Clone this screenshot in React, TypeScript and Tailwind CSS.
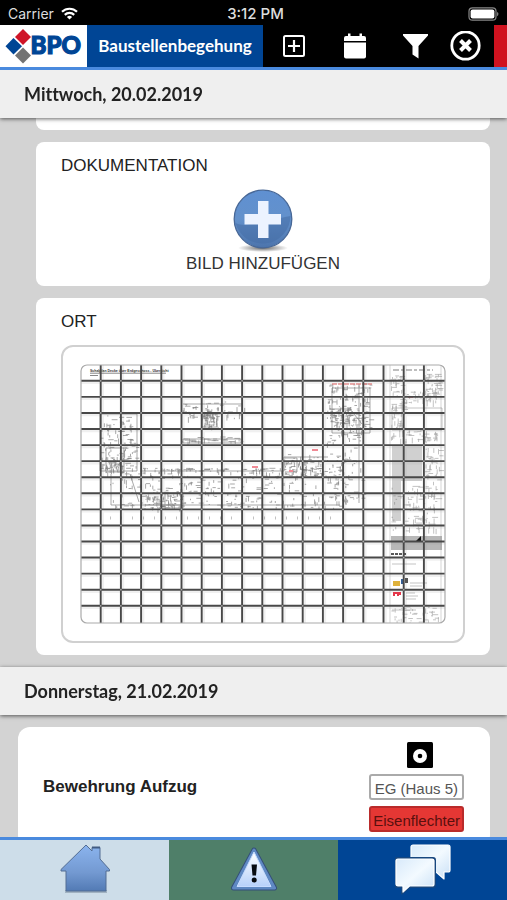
import type { ReactNode } from "react";

const SANS = "font-['Liberation_Sans',Arial,sans-serif]";
const LATO = "font-['Lato','Open_Sans',sans-serif]";

export default function App() {
  return (
    <div className={`flex h-dvh flex-col overflow-hidden bg-[#d3d3d3] text-[#222] ${SANS}`}>
      <StatusBar />
      <Toolbar />
      <main className="min-h-0 flex-1 overflow-y-auto [scrollbar-width:none]">
        <DateHeading>Mittwoch, 20.02.2019</DateHeading>
        <div className="flex flex-col gap-3 pb-3 pl-9 pr-[17px]">
          {/* end of the entry that is scrolled under the heading */}
          <div className="h-3 rounded-b-lg bg-white" />
          <section className="rounded-lg bg-white px-[25px] pt-3 pb-[10px]">
            <h3 className="text-[17px] leading-6">DOKUMENTATION</h3>
            <button type="button" className="mx-auto mt-[10px] flex flex-col items-center">
              <AddImageIcon />
              <span className="text-[17px] leading-6 text-[#333]">BILD HINZUFÜGEN</span>
            </button>
          </section>
          <section className="rounded-lg bg-white px-[25px] pt-3 pb-3">
            <h3 className="text-[17px] leading-6">ORT</h3>
            <div className="mt-[11px] rounded-xl border-2 border-[#d0d0d0] p-[17px]">
              <FloorPlan />
            </div>
          </section>
        </div>
        <DateHeading>Donnerstag, 21.02.2019</DateHeading>
        <div className="pt-3 pl-[18px] pr-[17px]">
          <article className="flex items-center justify-between rounded-xl bg-white py-[15px] pl-[25px] pr-[26px]">
            <h3 className="text-[17px] leading-6 font-bold">Bewehrung Aufzug</h3>
            <div className="flex flex-col items-end gap-[6px] text-[15px]">
              <span className="mr-[31px]">
                <DiscIcon />
              </span>
              <span className="rounded-[3px] border-2 border-[#aaa] px-1 pt-1 leading-[18px] text-[#555]">
                EG (Haus 5)
              </span>
              <span className="rounded-[3px] border-2 border-[#b92b2b] bg-[#e53734] px-[2px] pt-1 leading-[18px] text-[#5a100e]">
                Eisenflechter
              </span>
            </div>
          </article>
        </div>
      </main>
      <TabBar />
    </div>
  );
}

function StatusBar() {
  return (
    <div className="grid h-[25px] shrink-0 grid-cols-3 items-center bg-black px-2 pt-[2px] font-['Inter','Roboto',sans-serif] text-[14px] leading-5 text-[#ddd]">
      <div className="flex items-center gap-[7px]">
        <span>Carrier</span>
        <svg width="17" height="13" viewBox="0 0 17 13" fill="none" stroke="#fff" strokeWidth="2.2">
          <path d="M1 4.8a10.7 10.7 0 0 1 15 0" />
          <path d="M3.8 7.9a6.7 6.7 0 0 1 9.4 0" />
          <path d="M8.5 12.6 5.9 9.9a3.8 3.8 0 0 1 5.2 0Z" fill="#fff" stroke="none" />
        </svg>
      </div>
      <span className="pl-1 text-center text-[15px] font-medium">3:12 PM</span>
      <svg className="justify-self-end" width="32" height="14" viewBox="0 0 32 14">
        <rect x="2" y="0.8" width="27" height="12.4" rx="3.5" fill="none" stroke="#888" strokeWidth="1.2" />
        <rect x="3.6" y="2.4" width="23.8" height="9.200" rx="2" fill="#fff" />
        <path d="M30.2 5v4.2c1.6-.6 1.6-3.600 0-4.200Z" fill="#999" />
      </svg>
    </div>
  );
}

function Toolbar() {
  return (
    <header className="flex h-[45px] shrink-0 items-stretch border-b-3 border-[#4a8ade] bg-black">
      <a href="#start" aria-label="BPO" className="flex w-[87px] shrink-0 items-center bg-white">
        <svg width="87" height="42" viewBox="0 0 87 42">
          <path d="M23 4 31 12 23 20 15 12Z" fill="#cf1528" />
          <path d="M13.500 13 22 21.300 13.500 29.500 5.500 21.300Z" fill="#004595" />
          <path d="M23 22.500 31 30.500 23 38.500 15 30.500Z" fill="#737373" />
          <text
            x="30.500"
            y="29"
            fill="#004595"
            stroke="#004595"
            strokeWidth="1.200"
            fontFamily="Lato, sans-serif"
            fontWeight="900"
            fontSize="24"
          >
            BPO
          </text>
        </svg>
      </a>
      <h1
        className={`flex w-[176px] shrink-0 items-center justify-center bg-[#004595] text-[17px] leading-6 font-bold text-white ${LATO}`}
      >
        Baustellenbegehung
      </h1>
      <div className="flex flex-1 text-white">
        <button type="button" aria-label="Neuer Eintrag" className="flex flex-1 items-center justify-center">
          <svg width="22" height="22" viewBox="0 0 22 22" fill="none" stroke="currentColor" strokeWidth="2">
            <rect x="1" y="1" width="20" height="20" rx="1.500" />
            <path d="M11 5v12M5 11h12" strokeWidth="2.200" />
          </svg>
        </button>
        <button type="button" aria-label="Kalender" className="flex flex-1 items-center justify-center">
          <svg width="22" height="26" viewBox="0 0 22 26" fill="currentColor">
            <path d="M2 3h2V.5h2.500V3h9V.5H18V3h2a2 2 0 0 1 2 2v3H0V5a2 2 0 0 1 2-2Z" />
            <path d="M0 9.500h22v14a2 2 0 0 1-2 2H2a2 2 0 0 1-2-2Z" />
          </svg>
        </button>
        <button type="button" aria-label="Filter" className="flex flex-1 items-center justify-center">
          <svg width="25" height="26" viewBox="0 0 25 26" fill="currentColor">
            <path d="M0 1h25v1.500L15.500 13v12.500l-6-4V13L0 2.500Z" />
          </svg>
        </button>
        <button type="button" aria-label="Schließen" className="flex w-12 items-center justify-center pr-[10px]">
          <svg width="31" height="31" viewBox="0 0 31 31" fill="none" stroke="currentColor">
            <circle cx="15.500" cy="14.500" r="13.700" strokeWidth="2.800" />
            <path d="m10.500 9.500 10 10m0-10-10 10" strokeWidth="4" />
          </svg>
        </button>
      </div>
      <div className="w-[13px] shrink-0 bg-[#d0121f]" />
    </header>
  );
}

function DateHeading({ children }: { children: ReactNode }) {
  return (
    <h2
      className={`sticky top-0 z-10 bg-[#efefef] px-6 py-3 text-[18px] leading-6 font-bold shadow-[0_1px_4px_rgba(0,0,0,0.6)] [font-variant-ligatures:none] ${LATO}`}
    >
      {children}
    </h2>
  );
}

function AddImageIcon() {
  return (
    <svg width="64" height="64" viewBox="0 0 64 64">
      <defs>
        <linearGradient id="ball" x1="0" y1="0" x2="0" y2="1">
          <stop offset="0" stopColor="#5f90d2" />
          <stop offset="0.5" stopColor="#6391cb" />
          <stop offset="1" stopColor="#4c74ac" />
        </linearGradient>
        <radialGradient id="ballShadow">
          <stop offset="0" stopColor="#000" stopOpacity="0.6" />
          <stop offset="1" stopColor="#000" stopOpacity="0" />
        </radialGradient>
      </defs>
      <ellipse cx="32" cy="60" rx="25" ry="4" fill="url(#ballShadow)" />
      <circle cx="32" cy="31" r="28.800" fill="url(#ball)" stroke="#476796" strokeWidth="1.300" />
      <path d="M4.500 35c11 5 17-1 27-2s17-3 28-5A28 28 0 0 1 4.500 35Z" fill="#466ea5" opacity="0.55" />
      <path d="M27 13h10.500v13H50v10.500H37.500V50H27V36.500H13.500V26H27Z" fill="#ecf3ff" />
    </svg>
  );
}

function DiscIcon() {
  return (
    <svg className="block" width="26" height="26" viewBox="0 0 26 26">
      <rect width="26" height="26" rx="1.500" fill="#000" />
      <circle cx="13" cy="14" r="7" fill="#fff" />
      <circle cx="13" cy="14" r="2.300" fill="#000" />
    </svg>
  );
}

// Small repeatable generator, so the plan looks the same on every render.
function marks(seed: number, x: number, y: number, w: number, h: number, count: number, max = 7) {
  let s = seed;
  const next = () => {
    s = (s * 16807) % 2147483647;
    return s / 2147483647;
  };
  let d = "";
  for (let i = 0; i < count; i++) {
    const px = (x + next() * w).toFixed(1);
    const py = (y + next() * h).toFixed(1);
    const len = (1 + next() * max).toFixed(1);
    d += `M${px} ${py}${next() > 0.5 ? "h" : "v"}${len}`;
  }
  return d;
}

const WINGS = [
  marks(1201, 20, 51, 38, 55, 90, 5),
  marks(2311, 25, 83, 24, 26, 65, 4),
  marks(3407, 103, 38, 62, 16, 55, 5),
  marks(4519, 122, 45, 16, 18, 55, 4),
  marks(5623, 102, 73, 60, 5, 32, 5),
  marks(6733, 30, 106, 230, 38, 260, 4),
  marks(7841, 65, 128, 38, 17, 65, 4),
  marks(8951, 204, 90, 38, 22, 75, 4),
  marks(9067, 247, 20, 43, 48, 130, 4),
  marks(1181, 250, 44, 28, 18, 65, 4),
  marks(2297, 247, 68, 35, 70, 90, 4),
  marks(3301, 60, 104, 180, 3, 80, 5),
];

const LEGEND = [
  marks(4409, 311, 11, 14, 65, 75, 6),
  marks(5501, 345, 10, 14, 28, 65, 6),
  marks(6607, 323, 23, 20, 18, 22, 5),
  marks(7703, 325, 66, 34, 12, 38, 5),
  marks(8807, 345, 80, 15, 45, 42, 5),
  marks(9901, 311, 122, 46, 45, 90, 7),
  marks(1013, 311, 243, 48, 16, 42, 5),
];

function FloorPlan() {
  const columns = Array.from({ length: 17 }, (_, i) => 20.7 + i * 20.2);
  const rows = Array.from({ length: 15 }, (_, i) => 16.8 + i * 16.07);
  return (
    <svg className="block h-auto w-full" viewBox="0 0 366 260" role="img" aria-label="Übersichtsplan">
      <defs>
        <clipPath id="sheet">
          <rect x="1" y="1" width="364" height="258" rx="6" />
        </clipPath>
      </defs>
      <g clipPath="url(#sheet)">
        <path d="M0 0h366v260H0Z" fill="#fff" />
        <g stroke="#f0f0f0" strokeWidth="2.500">
          {columns.map((x) => (
            <path key={x} d={`M${x + 2} 0v260`} />
          ))}
          {rows.map((y) => (
            <path key={y} d={`M0 ${y + 2}h366`} />
          ))}
        </g>
        <text x="10" y="8" fontSize="3.500" fontWeight="700" fontFamily="Liberation Sans, Arial, sans-serif" fill="#333">
          Schalplan Decke über Erdgeschoss - Übersicht
        </text>
        <path d="M10 9.200h76M10 11.500h8" stroke="#555" strokeWidth="0.700" />

        <g fill="none" stroke="#333" strokeWidth="0.700" opacity="0.600">
          {WINGS.map((d) => (
            <path key={d} d={d} />
          ))}
          <path d="M20 50h37v57H20ZM26 84h18v24H26ZM31 110v31h70v-16M50 110l9 28M36 104l8-10" />
          <path d="M103 40h60M103 75h58v4h-58ZM122 50h15v13h-15ZM126 53h8v8h-8ZM85 129h18v15H85Z" />
          <path d="M60 107h144V93h44M65 141h195M205 94h12v14h-12M250 45h20l12 15M252 24h38v45h-38ZM279 20v119" />
          <path d="M30 154h230" strokeDasharray="1 10" strokeWidth="3" opacity="0.500" />
        </g>
        <path d="M252 20h40" stroke="#d66" strokeWidth="1.500" strokeDasharray="5 1" opacity="0.700" />
        <path d="M172 103h6M232 86h6M209 107h4M328 33h5" stroke="#f08a95" strokeWidth="2" />

        {/* title block on the right of the sheet */}
        <path d="M310 0v260M361 0v260" stroke="#bbb" strokeWidth="0.600" />
        <path d="M312 82h30v35h-30ZM312 117h9v40h-9Z" fill="#aaa" opacity="0.550" />
        <path d="M311 172h51v14h-51Z" fill="#888" opacity="0.600" />
        <g fill="none" stroke="#555" strokeWidth="0.700" opacity="0.500">
          {LEGEND.map((d) => (
            <path key={d} d={d} />
          ))}
          <path d="M313 6h40" strokeWidth="1.500" strokeDasharray="6 2 3 2" />
          <path d="M312 44h50v22h-50ZM322 44v22M344 44v22M312 200h24" />
          <path d="M330 219h17M330 222h12M326 229h9M326 232h12M326 235h10M312 246h24" />
        </g>
        <path d="M311 190h16" stroke="#222" strokeWidth="1.500" strokeDasharray="3 1" />
        <path d="m336 177 5-5v5Z" fill="#111" />
        <path d="M313 217h7v5h-7Z" fill="#dfb23c" />
        <path d="M321 215h3v5h-3Z" fill="#355f97" />
        <path d="M325 214h3v5h-3Z" fill="#555" />
        <path d="M313 228h8v3h-2v1h-2v-2h-2v2h-2Z" fill="#e4374a" />

        <g stroke="#484848" strokeWidth="1.900">
          {columns.map((x) => (
            <path key={x} d={`M${x} 0v260`} />
          ))}
          {rows.map((y) => (
            <path key={y} d={`M0 ${y}h366`} />
          ))}
        </g>
        <g fill="#aaa">
          {columns.map((x) => rows.map((y) => <circle key={`${x}-${y}`} cx={x} cy={y} r="0.900" />))}
        </g>
      </g>
      <rect x="1" y="1" width="364" height="258" rx="6" fill="none" stroke="#aaa" strokeWidth="1.200" />
    </svg>
  );
}

function TabBar() {
  return (
    <nav className="grid h-[63px] shrink-0 grid-cols-3 border-t-3 border-[#4a8ade]">
      <a href="#start" aria-label="Start" className="flex items-center justify-center bg-[#cddde9]">
        <svg width="52" height="52" viewBox="0 0 52 52">
          <defs>
            <linearGradient id="house" x1="0" y1="0" x2="0" y2="1">
              <stop offset="0" stopColor="#8bb4ee" />
              <stop offset="0.600" stopColor="#7399d1" />
              <stop offset="1" stopColor="#527ab4" />
            </linearGradient>
          </defs>
          <path d="M6 47.500h42" stroke="#50657a" strokeWidth="3" opacity="0.350" />
          <path
            d="M27 1 33 7V3.500h8V15l9.500 10.500v1.500H47v20H7V27H2v-1.500Z"
            fill="url(#house)"
            stroke="#536d93"
            strokeWidth="1"
          />
          <path d="M33 3.500h8" stroke="#425c82" strokeWidth="2" />
        </svg>
      </a>
      <a href="#maengel" aria-label="Mängel" className="flex items-center justify-center bg-[#4f7f69]">
        <svg width="48" height="48" viewBox="0 0 48 48">
          <defs>
            <linearGradient id="warning" x1="0" y1="0" x2="0" y2="1">
              <stop offset="0" stopColor="#fff" />
              <stop offset="1" stopColor="#b7d1fa" />
            </linearGradient>
          </defs>
          <path
            d="M24 4 44.500 42h-41Z"
            fill="#507bb5"
            stroke="#354f79"
            strokeWidth="5"
            strokeLinejoin="round"
          />
          <path d="M24 4 44.500 42h-41Z" fill="#507bb5" stroke="#5f89c3" strokeWidth="3" strokeLinejoin="round" />
          <path d="M24 6 41 40.500H7Z" fill="url(#warning)" stroke="#c7dcff" strokeWidth="1" />
          <path d="M21.500 18.500h5.500l-1 11h-3.500Z" fill="#080b10" />
          <circle cx="24.200" cy="34" r="2.500" fill="#080b10" />
        </svg>
      </a>
      <a href="#chat" aria-label="Nachrichten" className="flex items-center justify-center bg-[#004595]">
        <svg width="56" height="52" viewBox="0 0 56 52">
          <defs>
            <linearGradient id="bubble" x1="0" y1="0" x2="1" y2="1">
              <stop offset="0" stopColor="#d8eafa" />
              <stop offset="0.500" stopColor="#f3faff" />
              <stop offset="1" stopColor="#c9e0f6" />
            </linearGradient>
          </defs>
          <g fill="url(#bubble)" stroke="#fff" strokeWidth="1.200" strokeLinejoin="round">
            <path d="M18 1h35a2 2 0 0 1 2 2v23a2 2 0 0 1-2 2h-4v7l-8-7H18a2 2 0 0 1-2-2V3a2 2 0 0 1 2-2Z" />
            <path
              d="M2 14h36a2 2 0 0 1 2 2v25a2 2 0 0 1-2 2H15l-8 6.500V43H2a2 2 0 0 1-2-2V16a2 2 0 0 1 2-2Z"
              stroke="#17477f"
              strokeWidth="2"
            />
            <path d="M3 15h34a2 2 0 0 1 2 2v23a2 2 0 0 1-2 2H14.500L8 48v-6H3a2 2 0 0 1-2-2V17a2 2 0 0 1 2-2Z" />
          </g>
        </svg>
      </a>
    </nav>
  );
}
